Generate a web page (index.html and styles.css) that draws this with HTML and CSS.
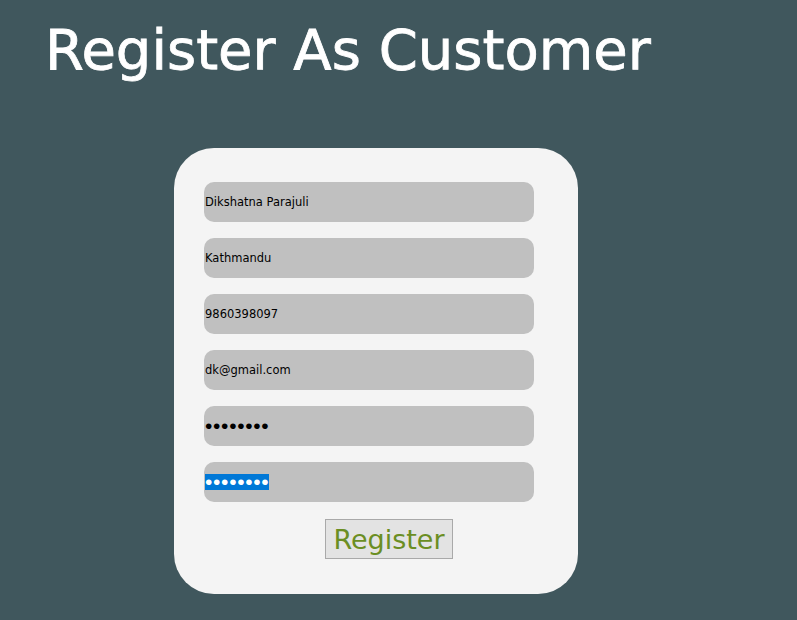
FILE: index.html
```html
<!DOCTYPE html>
<html>
<head>
<meta charset="utf-8">
<link rel="stylesheet" href="styles.css">
</head>
<body>
<h1 class="title">Register As Customer</h1>
<form class="card">
  <input class="field" type="text" value="Dikshatna Parajuli">
  <input class="field" type="text" value="Kathmandu">
  <input class="field" type="text" value="9860398097">
  <input class="field" type="text" value="dk@gmail.com">
  <input class="field pw" type="password" value="password">
  <div class="field pw fake"><span class="sel">••••••••</span></div>
  <button class="btn" type="button">Register</button>
</form>
</body>
</html>
```
FILE: styles.css
```css
html, body {
  margin: 0;
  padding: 0;
  background: #40575d;
}
body {
  width: 797px;
  height: 620px;
  overflow: hidden;
}
.title {
  margin: 0;
  padding: 14px 0 0 45px;
  font-family: "DejaVu Sans", sans-serif;
  font-weight: normal;
  font-size: 56px;
  line-height: 72px;
  color: #ffffff;
  -webkit-text-stroke: 0.8px #ffffff;
}
.card {
  box-sizing: border-box;
  margin: 62px 0 0 174px;
  width: 404px;
  height: 446px;
  padding: 34px 30px 0 30px;
  background: #f4f4f4;
  border-radius: 40px;
  display: flex;
  flex-direction: column;
  align-items: flex-start;
  gap: 16px;
}
.field {
  box-sizing: border-box;
  width: 330px;
  height: 40px;
  margin: 0;
  padding: 0 0 0 1px;
  border: none;
  border-radius: 10px;
  background: #c0c0c0;
  font-family: "DejaVu Sans", sans-serif;
  font-size: 11.5px;
  color: #000;
  outline: none;
}
.pw {
  font-family: "Liberation Sans", sans-serif;
  font-size: 21px;
  letter-spacing: 0.7px;
}
.fake {
  display: flex;
  align-items: center;
  padding-left: 1px;
}
.sel {
  background: #0078d7;
  color: #ffffff;
  line-height: 16px;
  height: 16px;
  display: inline-block;
  font-size: 21px;
}
.btn {
  box-sizing: border-box;
  margin: 1px 0 0 121px;
  width: 128px;
  height: 40px;
  padding: 0;
  border: 1px solid #a9a9a9;
  background: #e3e3e3;
  color: #6b8e23;
  font-family: "DejaVu Sans", sans-serif;
  font-size: 27px;
  border-radius: 0;
}
```
